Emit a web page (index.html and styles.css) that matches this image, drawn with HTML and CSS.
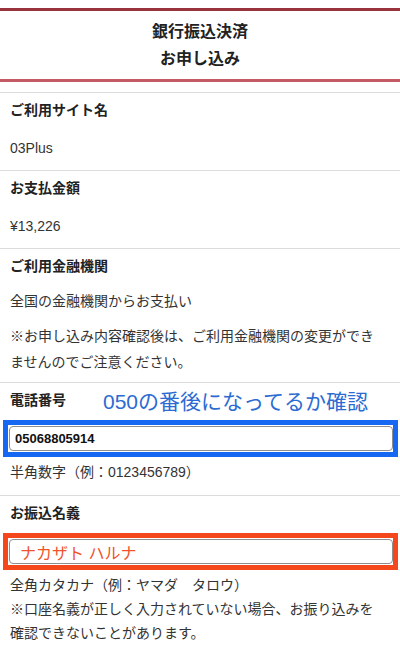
FILE: index.html
```html
<!DOCTYPE html>
<html lang="ja">
<head>
    <meta charset="UTF-8">
    <meta name="viewport" content="width=device-width, initial-scale=1.0">
    <title>銀行振込決済 お申し込み</title>
    <link rel="stylesheet" href="styles.css">
</head>
<body>
    <div class="page">
        <div class="page-header">
            <h1>銀行振込決済<br>お申し込み</h1>
        </div>

        <div class="section">
            <div class="label">ご利用サイト名</div>
            <p class="value">03Plus</p>
        </div>

        <div class="section">
            <div class="label">お支払金額</div>
            <p class="value">¥13,226</p>
        </div>

        <div class="section section-bank">
            <div class="label">ご利用金融機関</div>
            <p class="value bank-value">全国の金融機関からお支払い</p>
            <p class="caution">※お申し込み内容確認後は、ご利用金融機関の変更ができ<br>ませんのでご注意ください。</p>
        </div>

        <div class="section section-tel">
            <div class="label-row">
                <div class="label">電話番号</div>
                <span class="memo">050の番後になってるか確認</span>
            </div>
            <div class="mark mark-blue">
                <input type="text" id="telInput" class="field field-tel" value="05068805914">
            </div>
            <p class="hint">半角数字（例：0123456789）</p>
        </div>

        <div class="section section-name">
            <div class="label">お振込名義</div>
            <div class="mark mark-orange">
                <input type="text" id="nameInput" class="field field-name" value="ナカザト ハルナ">
            </div>
            <p class="hint">全角カタカナ（例：ヤマダ　タロウ）<br>※口座名義が正しく入力されていない場合、お振り込みを<br>確認できないことがあります。</p>
        </div>
    </div>
</body>
</html>
```

FILE: styles.css
```css
body {
    margin: 0;
    font-family: "Liberation Sans", "Noto Sans CJK JP", sans-serif;
    font-size: 14px;
    color: #333;
    background-color: #fff;
}

.page {
    padding-top: 8px;
}

.page-header {
    border-top: 3px solid #97343d;
    border-bottom: 3px solid #c45a66;
    padding: 7px 0;
    margin-bottom: 10px;
    text-align: center;
}

.page-header h1 {
    margin: 0;
    font-size: 16px;
    font-weight: 700;
    line-height: 27px;
    color: #222;
}

.section {
    border-top: 1px solid #dcdcdc;
    padding: 7px 10px 12px;
}

.label {
    font-weight: 700;
    line-height: 20px;
    color: #222;
}

.value {
    margin: 18px 0 0;
    line-height: 20px;
}

.bank-value {
    margin-top: 15px;
}

.section-bank {
    padding-bottom: 7px;
}

.caution {
    margin: 12px 0 0;
    line-height: 26px;
}

.label-row {
    display: flex;
    align-items: center;
    height: 20px;
}

.memo {
    margin-left: 37px;
    font-size: 21px;
    line-height: 20px;
    color: #2b6bd2;
    position: relative;
    top: 2px;
}

.mark {
    margin: 10px -8px 0 -7px;
    padding: 1px 0 1px 1px;
    border: 5px solid #1668f2;
}

.mark-orange {
    border-color: #f4471c;
}

.field {
    display: block;
    box-sizing: border-box;
    width: 100%;
    height: 25px;
    margin: 0;
    padding: 0 5px;
    border: 1px solid #8e8e8e;
    border-radius: 4px;
    background-color: #fff;
    font-family: "Liberation Sans", "Noto Sans CJK JP", sans-serif;
}

.field-tel {
    font-size: 13px;
    font-weight: 700;
    color: #111;
}

.field-name {
    padding-left: 10px;
    font-size: 16px;
    color: #f0522b;
}

.hint {
    margin: 3px 0 0;
    line-height: 24px;
}

.section-tel {
    padding-bottom: 11px;
}

.section-name {
    padding-bottom: 0;
}
```
